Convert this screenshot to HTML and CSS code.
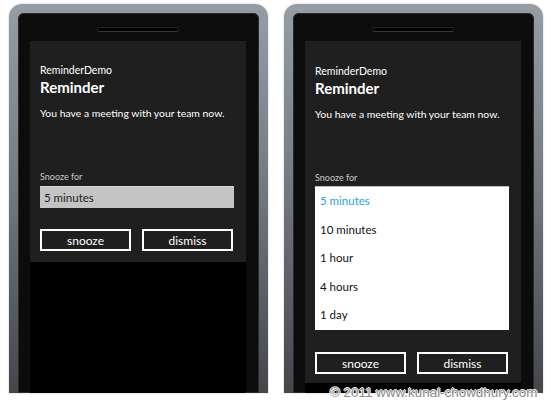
FILE: index.html
```html
<!DOCTYPE html>
<html lang="en">
<head>
    <meta charset="UTF-8">
    <title>ReminderDemo</title>
    <link rel="stylesheet" href="styles.css">
</head>
<body>
    <div id="stage">
        <div class="phone">
            <div class="bezel">
                <div class="speaker"></div>
                <div class="screen">
                    <div class="dialog">
                        <div class="app-name">ReminderDemo</div>
                        <div class="title">Reminder</div>
                        <div class="message">You have a meeting with your team now.</div>
                        <div class="label">Snooze for</div>
                        <div class="picker">5 minutes</div>
                        <div class="buttons">
                            <button class="btn">snooze</button>
                            <button class="btn">dismiss</button>
                        </div>
                    </div>
                </div>
            </div>
        </div>
        <div class="phone">
            <div class="bezel">
                <div class="speaker"></div>
                <div class="screen">
                    <div class="dialog open">
                        <div class="app-name">ReminderDemo</div>
                        <div class="title">Reminder</div>
                        <div class="message">You have a meeting with your team now.</div>
                        <div class="label">Snooze for</div>
                        <ul class="picker-list">
                            <li class="selected">5 minutes</li>
                            <li>10 minutes</li>
                            <li>1 hour</li>
                            <li>4 hours</li>
                            <li>1 day</li>
                        </ul>
                        <div class="buttons">
                            <button class="btn">snooze</button>
                            <button class="btn">dismiss</button>
                        </div>
                    </div>
                </div>
            </div>
        </div>
        <div class="copyright">© 2011 www.kunal-chowdhury.com</div>
    </div>
</body>
</html>
```

FILE: styles.css
```css
body {
    margin: 0;
    background-color: #fff;
    font-family: Lato, "Open Sans", sans-serif;
}

#stage {
    position: relative;
    display: flex;
    align-items: flex-start;
    gap: 16px;
    height: 407px;
    padding: 4px 0 0 9px;
    box-sizing: border-box;
}

.phone {
    width: 259px;
    height: 389px;
    overflow: hidden;
    padding: 9px 9px 0 9px;
    box-sizing: border-box;
    border-radius: 13px 13px 0 0;
    background: linear-gradient(#979da5, #7a7f86 40%, #44464a);
    box-shadow: 0 0 2px rgba(0, 0, 0, 0.25);
    display: flex;
}

.bezel {
    flex: 1;
    display: flex;
    flex-direction: column;
    align-items: flex-start;
    padding: 14px 13px 0 12px;
    border-radius: 6px 6px 0 0;
    background-color: #0c0c0c;
    box-shadow: inset 0 0 0 1px #2a2b2d;
}

.speaker {
    align-self: center;
    width: 80px;
    height: 3px;
    border-radius: 2px;
    background-color: #000;
    border: 1px solid #262626;
    border-bottom-color: #3a3a3a;
}

.screen {
    flex: 1;
    width: 216px;
    margin-top: 9px;
    background-color: #000;
}

.dialog {
    background-color: #1f1f1f;
    color: #fff;
    padding: 22px 12px 11px 10px;
    white-space: nowrap;
}

.dialog.open {
    padding-top: 23px;
    padding-bottom: 9px;
}

.app-name {
    font-size: 10.5px;
    line-height: 14px;
}

.title {
    font-size: 15px;
    line-height: 20px;
    font-weight: 700;
}

.message {
    font-size: 10.4px;
    line-height: 14px;
    margin-top: 9px;
}

.label {
    font-size: 9px;
    line-height: 12px;
    margin-top: 51px;
    color: #c8c8c8;
}

.picker {
    margin-top: 3px;
    height: 22px;
    line-height: 21px;
    padding-left: 4px;
    background-color: #c4c4c4;
    border-top: 1px solid #d6d6d6;
    box-sizing: border-box;
    color: #1c1c1c;
    font-size: 11.5px;
}

.picker-list {
    list-style: none;
    margin: 2px 0 0 0;
    padding: 0;
    height: 144px;
    background-color: #fff;
    border-top: 1px solid #c0c0c0;
    box-sizing: border-box;
}

.picker-list li {
    height: 28.6px;
    line-height: 28.6px;
    padding-left: 5px;
    color: #111;
    font-size: 11.5px;
}

.picker-list li.selected {
    color: #27a1e2;
}

.buttons {
    display: flex;
    gap: 11px;
    margin-top: 21px;
}

.open .buttons {
    margin-top: 22px;
}

.btn {
    width: 91px;
    height: 22px;
    padding: 0;
    border: 2px solid #fff;
    background: transparent;
    color: #fff;
    font-family: inherit;
    font-size: 12px;
    line-height: 17px;
}

.copyright {
    position: absolute;
    left: 330px;
    top: 385px;
    font-family: "Liberation Sans", Arial, sans-serif;
    font-size: 13.4px;
    color: #8a8a8a;
    text-shadow: -1px 0 #fff, 1px 0 #fff, 0 -1px #fff, 0 1px #fff;
}
```
